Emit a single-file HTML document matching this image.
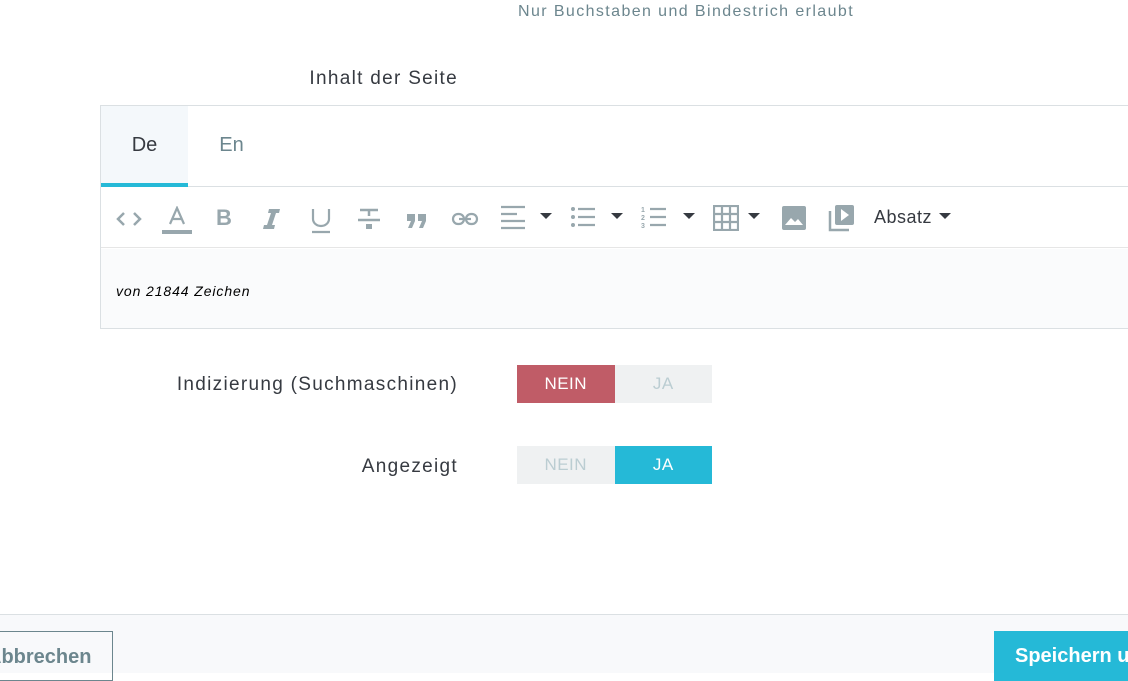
<!DOCTYPE html>
<html><head><meta charset="utf-8"><style>
*{box-sizing:border-box;margin:0;padding:0}
body{width:1128px;height:673px;overflow:hidden;background:#fff;font-family:"Liberation Sans",sans-serif;position:relative;color:#363a41}
.abs{position:absolute}
.hint{left:518px;top:3px;font-size:16px;color:#6c868e;letter-spacing:1.4px}
.lbl{font-size:19px;color:#363a41;text-align:right;letter-spacing:1.3px;white-space:nowrap}
.card{left:100px;top:105px;width:1040px;height:224px;border:1px solid #dbe0e3}
.tabs{height:81px;border-bottom:1px solid #dbe0e3;position:relative}
.tab{position:absolute;top:0;height:81px;width:87px;text-align:center;line-height:78px;font-size:20px}
.tb{position:absolute;top:82px;left:0;right:0;height:60px;border-bottom:1px solid #e6e6e6}
.ed{position:absolute;top:143px;left:0;right:0;bottom:0;background:#fafbfc}
.ic{position:absolute;top:20px}
.caret{position:absolute;top:25px;width:0;height:0;border-left:6px solid transparent;border-right:6px solid transparent;border-top:6px solid #363a41}
.sw{position:absolute;width:195px;height:38px;display:flex;font-size:17px;letter-spacing:0.5px}
.sw div{flex:1;text-align:center;line-height:38px}
</style></head><body>
<div class="abs hint">Nur Buchstaben und Bindestrich erlaubt</div>
<div class="abs lbl" style="right:670px;top:68px">Inhalt der Seite</div>
<div class="abs card">
 <div class="tabs">
  <div class="tab" style="left:0;background:#f4f8fb;border-bottom:4px solid #25b9d7">De</div>
  <div class="tab" style="left:87px;color:#6c868e">En</div>
 </div>
 <div class="tb">
  <svg class="ic" style="left:14px" width="28" height="22" viewBox="0 0 28 22"><path d="M9 5 3 11 9 17M19 5 25 11 19 17" stroke="#98a7ad" stroke-width="2.5" fill="none"/></svg>
  <svg class="ic" style="left:60px;top:18px" width="32" height="30" viewBox="0 0 32 30"><path d="M9 18 16 2 23 18M11.5 13h9" stroke="#98a7ad" stroke-width="2.2" fill="none"/><rect x="1" y="24" width="30" height="4" fill="#98a7ad"/></svg>
  <div class="ic" style="left:115px;top:17px;font-size:22px;font-weight:bold;color:#98a7ad">B</div>
  <svg class="ic" style="left:161px;top:20px" width="20" height="22" viewBox="0 0 20 22"><path d="M7 1h11l-1 4h-3L10 17h3l-1 4H1l1-4h3L9 5H6z" fill="#98a7ad"/></svg>
  <svg class="ic" style="left:208px" width="24" height="26" viewBox="0 0 24 26"><path d="M4 1v10a8 7 0 0 0 16 0V1M3 24h18" stroke="#98a7ad" stroke-width="2.2" fill="none"/></svg>
  <svg class="ic" style="left:256px" width="24" height="26" viewBox="0 0 24 26"><path d="M3 2h18M12 2v6M1 12h22" stroke="#98a7ad" stroke-width="2.5" fill="none"/><rect x="9" y="16" width="6" height="5" fill="#98a7ad"/></svg>
  <svg class="ic" style="left:305px;top:25px" width="22" height="16" viewBox="0 0 22 16"><path d="M1 1h8v7l-3 7H2l3-7H1zM12 1h8v7l-3 7h-4l3-7h-4z" fill="#98a7ad"/></svg>
  <svg class="ic" style="left:350px" width="28" height="22" viewBox="0 0 28 22"><rect x="2" y="6" width="11" height="10" rx="5" stroke="#98a7ad" stroke-width="2.2" fill="none"/><rect x="15" y="6" width="11" height="10" rx="5" stroke="#98a7ad" stroke-width="2.2" fill="none"/><path d="M8 11h12" stroke="#98a7ad" stroke-width="2.2"/></svg>
  <svg class="ic" style="left:399px;top:17px" width="26" height="28" viewBox="0 0 26 28"><path d="M1 2h24M1 9h16M1 16h24M1 23h24" stroke="#98a7ad" stroke-width="2.2"/></svg>
  <div class="caret" style="left:439px"></div>
  <svg class="ic" style="left:469px;top:18px" width="26" height="26" viewBox="0 0 26 26"><path d="M8 3h17M8 11h17M8 19h17" stroke="#98a7ad" stroke-width="2.2"/><circle cx="3" cy="3" r="2" fill="#98a7ad"/><circle cx="3" cy="11" r="2" fill="#98a7ad"/><circle cx="3" cy="19" r="2" fill="#98a7ad"/></svg>
  <div class="caret" style="left:510px"></div>
  <svg class="ic" style="left:540px;top:18px" width="26" height="26" viewBox="0 0 26 26"><path d="M9 3h16M9 11h16M9 19h16" stroke="#98a7ad" stroke-width="2.2"/><text x="0" y="6" font-size="7" font-weight="bold" fill="#98a7ad">1</text><text x="0" y="14" font-size="7" font-weight="bold" fill="#98a7ad">2</text><text x="0" y="22" font-size="7" font-weight="bold" fill="#98a7ad">3</text></svg>
  <div class="caret" style="left:582px"></div>
  <svg class="ic" style="left:612px;top:17px" width="26" height="26" viewBox="0 0 26 26"><rect x="1" y="1" width="24" height="24" stroke="#98a7ad" stroke-width="2.2" fill="none"/><path d="M9 1v24M17 1v24M1 9h24M1 17h24" stroke="#98a7ad" stroke-width="2.2"/></svg>
  <div class="caret" style="left:647px"></div>
  <svg class="ic" style="left:681px;top:18px" width="24" height="24" viewBox="0 0 24 24"><rect x="0" y="0" width="24" height="24" rx="2" fill="#98a7ad"/><path d="M3 19 9 12 13 16 16 13 21 19Z" fill="#fff"/></svg>
  <svg class="ic" style="left:727px;top:16px" width="28" height="28" viewBox="0 0 28 28"><path d="M2 7v19h19" stroke="#98a7ad" stroke-width="2.5" fill="none"/><rect x="7" y="1" width="19" height="20" rx="2" fill="#98a7ad"/><path d="M13 5v12l8-6z" fill="#fff"/></svg>
  <div class="ic" style="left:773px;top:19px;font-size:18px;color:#363a41;letter-spacing:0.5px">Absatz</div>
  <div class="caret" style="left:838px"></div>
 </div>
 <div class="ed"><div class="abs" style="left:15px;top:34px;font-size:14px;font-style:italic;color:#000;letter-spacing:0.9px">von 21844 Zeichen</div></div>
</div>
<div class="abs lbl" style="right:670px;top:374px">Indizierung (Suchmaschinen)</div>
<div class="abs sw" style="left:517px;top:365px"><div style="background:#c05c67;color:#fff">NEIN</div><div style="background:#eff1f2;color:#bbcdd2">JA</div></div>
<div class="abs lbl" style="right:670px;top:456px">Angezeigt</div>
<div class="abs sw" style="left:517px;top:446px"><div style="background:#eff1f2;color:#bbcdd2">NEIN</div><div style="background:#25b9d7;color:#fff">JA</div></div>
<div class="abs" style="left:0;top:614px;width:1128px;height:59px;background:#f8f9fb;border-top:1px solid #dbe0e3"></div>
<div class="abs" style="left:-40px;top:631px;width:153px;height:50px;border:1px solid #6c868e;font-size:20px;font-weight:bold;color:#6c868e;padding:14px 0 0 26px">Abbrechen</div>
<div class="abs" style="left:994px;top:631px;width:200px;height:50px;background:#25b9d7;font-size:20px;font-weight:bold;color:#fff;padding:14px 0 0 21px;white-space:nowrap">Speichern und</div>
</body></html>
